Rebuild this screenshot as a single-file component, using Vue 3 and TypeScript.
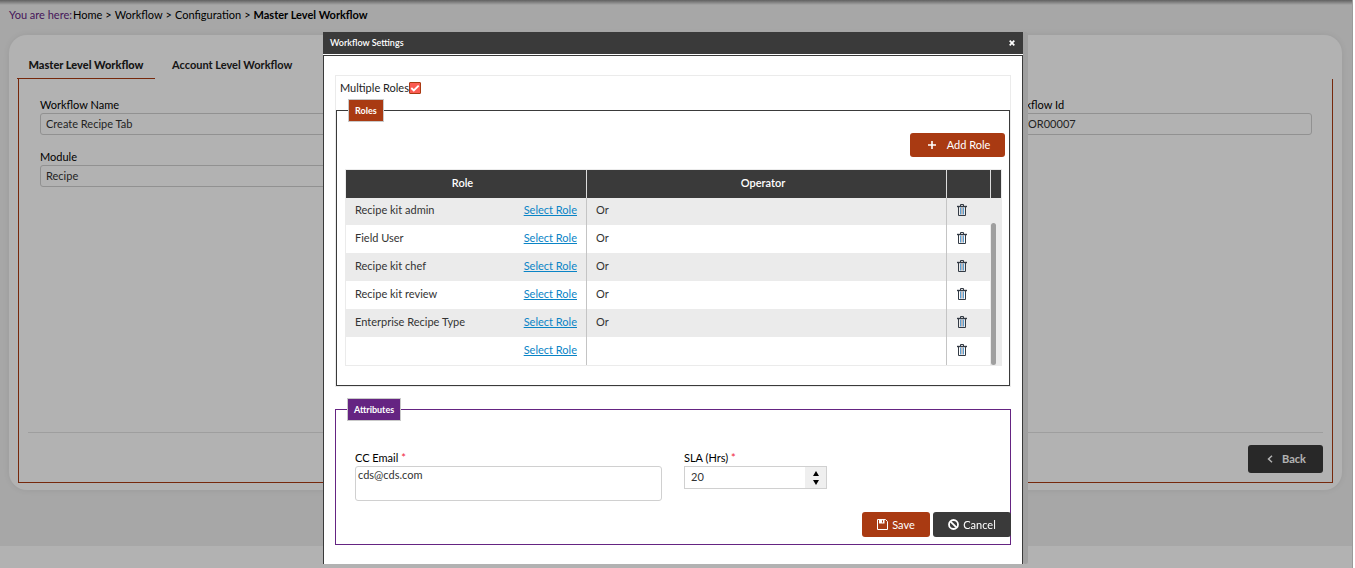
<script setup lang="ts">
import { ref } from 'vue'

interface RoleRow {
  name: string
  operator: string
}

const crumbs: string[] = ['Home', 'Workflow', 'Configuration']
const rows = ref<RoleRow[]>([
  { name: 'Recipe kit admin', operator: 'Or' },
  { name: 'Field User', operator: 'Or' },
  { name: 'Recipe kit chef', operator: 'Or' },
  { name: 'Recipe kit review', operator: 'Or' },
  { name: 'Enterprise Recipe Type', operator: 'Or' },
  { name: '', operator: '' },
])
const workflowName = ref('Create Recipe Tab')
const moduleName = ref('Recipe')
const workflowId = ref('WFOR00007')
const multipleRoles = ref(true)
const ccEmail = ref('cds@cds.com')
const sla = ref(20)

function addRole(): void {
  rows.value.push({ name: '', operator: '' })
}
function removeRole(index: number): void {
  rows.value.splice(index, 1)
}
</script>

<template>
  <div class="page">
    <div class="main">
      <nav class="crumbs" aria-label="Breadcrumb">
        <span class="here">You are here:</span>
        <template v-for="c in crumbs" :key="c">
          <a href="#">{{ c }}</a><span class="sep">&gt;</span>
        </template>
        <strong>Master Level Workflow</strong>
      </nav>
      <section class="card">
        <div class="tabs">
          <button type="button" class="tab active">Master Level Workflow</button>
          <button type="button" class="tab">Account Level Workflow</button>
        </div>
        <div class="panel">
          <div class="fields">
            <div class="field">
              <label for="wf-name">Workflow Name</label>
              <input id="wf-name" v-model="workflowName" type="text">
            </div>
            <div class="field last-col">
              <label for="wf-id">Workflow Id</label>
              <input id="wf-id" v-model="workflowId" type="text">
            </div>
            <div class="field">
              <label for="wf-module">Module</label>
              <input id="wf-module" v-model="moduleName" type="text">
            </div>
          </div>
          <div class="panel-foot">
            <button type="button" class="btn dark back">
              <svg width="6" height="8" viewBox="0 0 6 8"><path d="M5 0.7 1.5 4 5 7.3" fill="none" stroke="currentColor" stroke-width="1.5" /></svg>
              <span>Back</span>
            </button>
          </div>
        </div>
      </section>
    </div>
  </div>

  <div class="overlay">
    <div class="dialog" role="dialog" aria-labelledby="dlg-title">
      <header class="dlg-head">
        <h2 id="dlg-title">Workflow Settings</h2>
        <button type="button" class="close" aria-label="Close">
          <svg width="6" height="6" viewBox="0 0 6 6"><path d="M0.7 0.7 5.3 5.3M5.3 0.7 0.7 5.3" stroke="currentColor" stroke-width="1.7" /></svg>
        </button>
      </header>
      <div class="dlg-body">
        <div class="roles-box">
          <div class="multi">
            <label for="multi">Multiple Roles</label>
            <span class="check">
              <input id="multi" v-model="multipleRoles" type="checkbox">
              <svg v-if="multipleRoles" width="12" height="12" viewBox="0 0 12 12"><path d="M2.3 6 4.8 8.5 9.7 3.6" fill="none" stroke="#fff" stroke-width="1.8" /></svg>
            </span>
          </div>
          <fieldset class="group roles">
            <legend>Roles</legend>
            <div class="toolbar">
              <button type="button" class="btn rust add" @click="addRole">
                <svg width="8" height="8" viewBox="0 0 8 8"><path d="M4 0V8M0 4H8" stroke="currentColor" stroke-width="1.6" /></svg>
                <span>Add Role</span>
              </button>
            </div>
            <div class="grid">
              <table>
                <colgroup><col class="c-role"><col><col class="c-del"></colgroup>
                <thead>
                  <tr><th>Role</th><th>Operator</th><th aria-label="Actions"></th></tr>
                </thead>
                <tbody>
                  <tr v-for="(row, i) in rows" :key="i">
                    <td><div class="role-cell"><span>{{ row.name }}</span><a href="#">Select Role</a></div></td>
                    <td>{{ row.operator }}</td>
                    <td>
                      <button type="button" class="trash" aria-label="Delete role" @click="removeRole(i)">
                        <svg width="10" height="12" viewBox="0 0 10 12" fill="none" stroke="#333a44">
                          <path d="M3.5 2V0.5H6.5V2" />
                          <path d="M0 2.5H10" stroke-width="1.4" />
                          <path d="M1.5 3V11.5H8.5V3" />
                          <path d="M3.5 3.5V10.5M6.5 3.5V10.5" stroke="#5a9fd0" />
                          <path d="M5 3.5V10.5" stroke="#8b8590" />
                        </svg>
                      </button>
                    </td>
                  </tr>
                </tbody>
              </table>
              <div class="side">
                <div class="cap"></div>
                <div class="track"><div class="thumb"></div></div>
              </div>
            </div>
          </fieldset>
        </div>

        <fieldset class="group attrs">
          <legend>Attributes</legend>
          <div class="attr-fields">
            <div class="field">
              <label for="cc">CC Email <span class="req">*</span></label>
              <textarea id="cc" v-model="ccEmail"></textarea>
            </div>
            <div class="field">
              <label for="sla">SLA (Hrs) <span class="req">*</span></label>
              <div class="spin">
                <input id="sla" v-model="sla" type="number">
                <div class="arrows">
                  <button type="button" aria-label="Increase" @click="sla++"><svg width="6" height="5" viewBox="0 0 6 5"><path d="M3 0 6 5H0Z" /></svg></button>
                  <button type="button" aria-label="Decrease" @click="sla--"><svg width="6" height="5" viewBox="0 0 6 5"><path d="M3 5 6 0H0Z" /></svg></button>
                </div>
              </div>
            </div>
          </div>
          <div class="actions">
            <button type="button" class="btn rust save">
              <svg width="11" height="11" viewBox="0 0 11 11"><path d="M0.5 0.5H8.5L10.5 2.5V10.5H0.5Z" fill="none" stroke="currentColor" /><path d="M2 0.5H7.5V4.5H2Z" fill="currentColor" /><path d="M5.5 1.3V3.5" stroke="#a93a12" /></svg>
              <span>Save</span>
            </button>
            <button type="button" class="btn dark cancel">
              <svg width="11" height="11" viewBox="0 0 11 11" fill="none" stroke="currentColor" stroke-width="1.8"><circle cx="5.5" cy="5.5" r="4.5" /><path d="M2.3 2.3 8.7 8.7" /></svg>
              <span>Cancel</span>
            </button>
          </div>
        </fieldset>
      </div>
    </div>
    <div class="dlg-scroll"></div>
  </div>
</template>

<style>
html, body { margin: 0; background: #fff; }
</style>

<style scoped>
.page, .overlay {
  font-family: Lato, "Open Sans", sans-serif;
  font-size: 11px;
  line-height: 16px;
  color: #222;
  box-sizing: border-box;
}
.page *, .overlay * { box-sizing: border-box; }
button, input, textarea { font: inherit; color: inherit; margin: 0; }
button { border: 0; padding: 0; background: none; cursor: pointer; }
svg { display: block; flex: none; }

.page { min-height: 100vh; margin-right: 2px; border-right: 1px solid #ddd; }
.main {
  background: linear-gradient(#8a8a8a, #f0f0f0 5px);
  padding: 7px 10px 56px 9px;
}
.crumbs { display: flex; align-items: center; color: #000; height: 16px; }
.crumbs a { color: #000; text-decoration: none; }
.crumbs strong { font-weight: 700; }
.here { color: #652482; margin-right: 1px; }
.sep { margin: 0 3px; }
.card {
  margin-top: 12px;
  background: #fff;
  border-radius: 18px;
  padding: 18px 9px 7px;
  box-shadow: 0 0 8px rgba(0, 0, 0, .08);
}
.tabs { display: flex; height: 26px; align-items: stretch; margin-left: -1px; gap: 8px; }
.tab { padding: 0 9px 2px; font-weight: 700; }
.tab.active { border-bottom: 1px solid #a93a12; font-weight: 900; min-width: 138px; }
.panel { border: 1px solid #a93a12; border-top: 0; padding: 18px 9px 9px; }
.fields {
  display: grid;
  grid-template-columns: repeat(4, 1fr);
  gap: 14px;
  padding: 0 11px 0 12px;
  min-height: 335px;
  align-content: start;
}
.last-col { grid-column: 4; }
.field { display: flex; flex-direction: column; min-width: 0; color: #000; }
.field input, .field textarea {
  border: 1px solid #d0d0d0;
  border-radius: 3px;
  background: #fff;
  color: #333;
  outline: 0;
  width: 100%;
}
.fields input { height: 22px; padding: 0 5px 2px; }
.panel-foot { border-top: 1px solid #e3e3e3; padding-top: 12px; display: flex; justify-content: flex-end; }
.btn { display: inline-flex; align-items: center; justify-content: center; border-radius: 3px; color: #fff; height: 25px; gap: 4px; }
.rust { background: #a93a12; }
.dark { background: #3a3a3a; }
.back { width: 75px; height: 28px; gap: 9px; padding-left: 2px; font-weight: 700; }

.overlay {
  position: fixed;
  inset: 0 2px 0 0;
  padding: 32px 2px 4px 0;
  background: rgba(0, 0, 0, .3);
  display: flex;
  justify-content: center;
  align-items: stretch;
}
.dialog { width: 700px; background: #fff; display: flex; flex-direction: column; }
.dlg-head {
  height: 22px;
  background: #3a3a3a;
  color: #fff;
  display: flex;
  align-items: center;
  justify-content: space-between;
  padding: 0 8px 0 7px;
  margin-bottom: 1px;
}
.dlg-head h2 { margin: 0; font-size: 9px; font-weight: 600; }
.close { padding: 3px 0; color: #fff; }
.dlg-body { flex: 1; border: 1px solid #3a3a3a; border-bottom: 0; padding: 19px 11px; min-height: 0; }
.dlg-scroll { width: 5px; background: #a0a0a0; border-radius: 3px; }

.roles-box { border: 1px solid #ebebeb; }
.multi { display: flex; align-items: center; padding: 4px 4px 3px; color: #222; }
.check { position: relative; width: 12px; height: 12px; }
.check input { appearance: none; display: block; width: 12px; height: 12px; background: #fb5b52; border: 1px solid #a93a12; border-radius: 1px; }
.check svg { position: absolute; inset: 0; pointer-events: none; }
.group { margin: 0; min-width: 0; border: 1px solid #3a3a3a; padding: 0; }
.group legend {
  margin-left: 11px;
  padding: 0 6px;
  height: 23px;
  line-height: 21px;
  font-size: 9px;
  font-weight: 700;
  color: #fff;
  border: 1px solid #c9c9c9;
}
.roles legend { background: #a93a12; }
.toolbar { display: flex; justify-content: flex-end; padding: 11px 4px 0 0; }
.add { width: 95px; height: 24px; gap: 11px; padding-left: 3px; }
.grid { display: flex; margin: 12px 7px 19px 8px; border: 1px solid #ebebeb; }
table { flex: 1; width: 0; table-layout: fixed; border-collapse: separate; border-spacing: 0; color: #333; }
.c-role { width: 241px; }
.c-del { width: 43px; }
th, td { height: 28px; padding: 0 0 2px 9px; border-right: 1px solid #c4c4c4; text-align: left; }
th { background: #3a3a3a; color: #fff; font-weight: 600; text-align: center; padding: 0 7px 2px 0; border-color: #ddd; }
th:last-child, td:last-child { border-right: 0; }
tbody tr:nth-child(odd) td { background: #ebebeb; }
tbody tr:first-child td { height: 27px; padding-bottom: 4px; }
.role-cell { display: flex; justify-content: space-between; padding-right: 9px; }
.role-cell a { color: #0a84c6; }
.trash { display: block; padding: 1px; }
.side { width: 11px; display: flex; flex-direction: column; }
.cap { height: 28px; background: #3a3a3a; border-left: 1px solid #ddd; }
.track { flex: 1; background: #ebebeb; padding: 25px 0 0 1px; display: flex; }
.thumb { width: 5px; background: #9f9f9f; border-radius: 3px; }

.attrs { border-color: #652482; margin-top: 11px; }
.attrs legend { background: #652482; }
.attr-fields { display: grid; grid-template-columns: 307px 143px; gap: 22px; padding: 29px 19px 0; align-items: start; }
.req { color: #f01c3c; }
.attr-fields textarea { display: block; height: 35px; padding: 0 2px; resize: none; }
.spin { display: flex; height: 23px; border: 1px solid #d0d0d0; }
.spin input { flex: 1; width: 0; border: 0; padding: 0 6px 2px; appearance: textfield; }
.spin input::-webkit-inner-spin-button { appearance: none; }
.arrows { width: 21px; background: #efefef; display: flex; flex-direction: column; justify-content: center; gap: 4px; }
.arrows button { display: flex; justify-content: center; }
.actions { display: flex; justify-content: flex-end; gap: 3px; margin: 11px -1px 7px 0; }
.save { width: 68px; }
.cancel { width: 78px; }
</style>
